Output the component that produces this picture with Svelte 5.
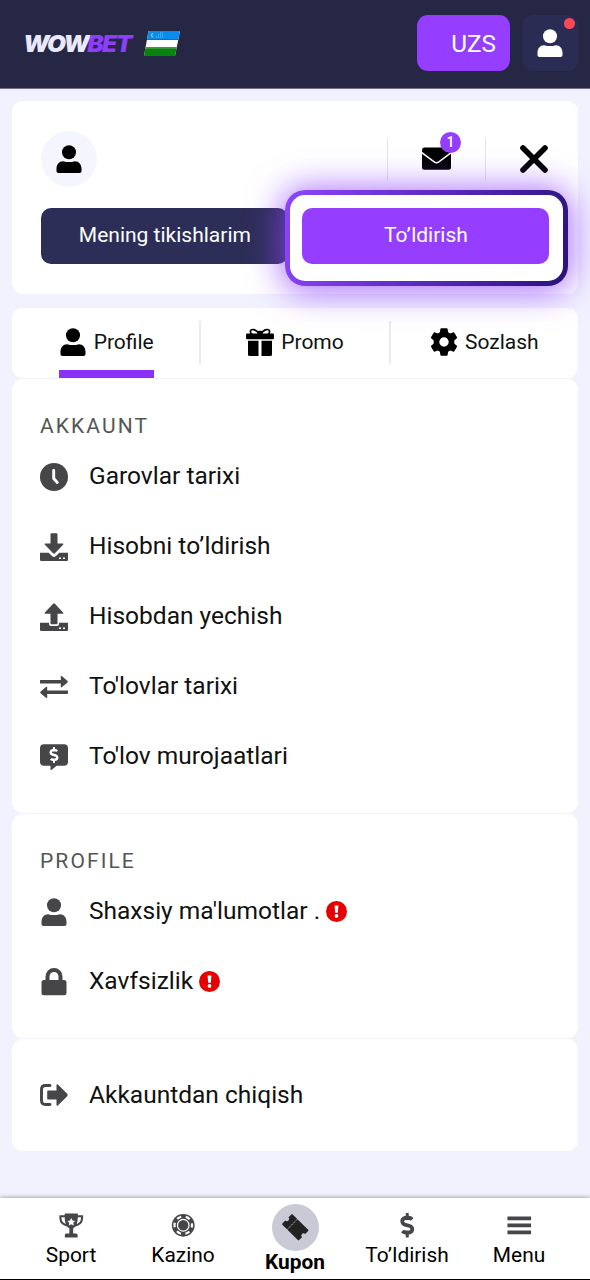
<script>
  const account = [
    { icon: 'clock', label: 'Garovlar tarixi' },
    { icon: 'download', label: 'Hisobni to’ldirish' },
    { icon: 'upload', label: 'Hisobdan yechish' },
    { icon: 'swap', label: "To'lovlar tarixi" },
    { icon: 'bubble', label: "To'lov murojaatlari" },
  ];
  const profile = [
    { icon: 'user', label: "Shaxsiy ma'lumotlar .", alert: true },
    { icon: 'lock', label: 'Xavfsizlik', alert: true },
  ];
  const exit = [{ icon: 'exit', label: 'Akkauntdan chiqish' }];
  const tabs = [
    { icon: 'user', label: 'Profile', active: true },
    { icon: 'gift', label: 'Promo' },
    { icon: 'gear', label: 'Sozlash' },
  ];
  const nav = [
    { icon: 'trophy', label: 'Sport' },
    { icon: 'chip', label: 'Kazino' },
    { icon: 'ticket', label: 'Kupon', active: true },
    { icon: 'dollar', label: 'To’ldirish' },
    { icon: 'menu', label: 'Menu' },
  ];
  const dollar = 'M209.2 233.4l-108-31.6C88.7 198.2 80 186.5 80 173.5c0-16.3 13.2-29.5 29.5-29.5h66.3c12.2 0 24.2 3.7 34.2 10.5 6.1 4.1 14.3 3.1 19.5-2l34.8-34c7.1-6.9 6.1-18.4-1.8-24.5C238 74.8 207.4 64.1 176 64V16c0-8.8-7.2-16-16-16h-32c-8.8 0-16 7.2-16 16v48h-2.5C45.8 64-5.4 118.7.5 183.6c4.2 46.1 39.4 83.6 83.8 96.6l102.5 30c12.5 3.7 21.2 15.3 21.2 28.3 0 16.3-13.2 29.5-29.5 29.5h-66.3C100 368 88 364.3 78 357.5c-6.1-4.1-14.3-3.1-19.5 2l-34.8 34c-7.1 6.9-6.1 18.4 1.8 24.5 24.5 19.2 55.1 29.9 86.5 30v48c0 8.8 7.2 16 16 16h32c8.8 0 16-7.2 16-16v-48.2c46.6-.9 90.3-28.6 105.7-72.7 21.5-61.6-14.6-124.8-72.5-141.7z';
</script>

{#snippet icon(name)}
  <svg class="icon" viewBox="0 0 28 28" fill="currentColor">
    {#if name === 'user'}
      <circle cx="14" cy="7.2" r="7" />
      <path d="M8.2 16.2c1.8.6 3.7.9 5.800.9s4-.3 5.800-.9c4.200 0 6.700 3.500 6.700 7.300v2.500c0 1.300-.8 2-2 2H3.500c-1.200 0-2-.7-2-2v-2.500c0-3.800 2.500-7.300 6.700-7.300z" />
    {:else if name === 'gift'}
      <rect x="0" y="5.500" width="28" height="5.700" rx="1.200" />
      <path d="M2 12.800h10.500V28H3.500Q2 28 2 26.500zM15.500 12.800H26v13.700q0 1.500-1.500 1.500h-9z" />
      <path d="M13.500 6.500C10 .5 4 .2 4.500 4c.1 1 .6 1.700 1.300 2.500M14.500 6.500C18 .5 24 .2 23.500 4c-.1 1-.6 1.700-1.300 2.500" fill="none" stroke="currentColor" stroke-width="1.700" />
      <rect x="11.300" y="2.800" width="5.400" height="3.500" rx="1.500" />
    {:else if name === 'gear'}
      <path fill-rule="evenodd" d="M11.200.3h5.600q.7 0 .8.7l.5 3.200 2.200 1.300 3.100-1.200q.6-.2.900.4l2.700 4.600q.3.600-.2 1l-2.500 2.100v3.200l2.500 2.100q.5.4.2 1l-2.700 4.600q-.3.600-.9.400l-3.100-1.200-2.200 1.300-.5 3.200q-.1.700-.8.700h-5.600q-.7 0-.8-.7l-.5-3.200-2.200-1.300-3.100 1.200q-.6.200-.9-.4L1 18.700q-.3-.6.200-1l2.500-2.100v-3.200l-2.500-2.100q-.5-.4-.2-1l2.700-4.600q.3-.6.9-.4l3.100 1.200 2.200-1.300.5-3.200q.1-.7.800-.7zM14 9.300a4.700 4.700 0 1 0 0 9.400a4.700 4.700 0 1 0 0-9.400z" />
    {:else if name === 'clock'}
      <circle cx="14" cy="14" r="14" />
      <path d="M13.700 7.500v8l3.600 4" fill="none" stroke="#fff" stroke-width="2.900" stroke-linecap="round" stroke-linejoin="round" />
    {:else if name === 'download'}
      <path d="M0 19.800h8.600l3.700 3.500q1.700 1.500 3.400 0l3.700-3.500H28v7q0 1.200-1.200 1.200H1.200Q0 28 0 26.800z" />
      <path d="M10.500 1.200Q10.500.2 11.500.2h5q1 0 1 1v9.300h5q1.700 0 .6 1.300l-8.200 8.400q-.9.900-1.800 0L4.900 11.800q-1.100-1.300.6-1.300h5z" />
      <path d="M19 24.500h2v1.500h-2zM23 24.500h2v1.500h-2z" fill="#fff" />
    {:else if name === 'upload'}
      <path d="M0 19.800h9v.6q0 2.600 2.600 2.600h4.800q2.600 0 2.600-2.600v-.6h9v7q0 1.200-1.200 1.200H1.200Q0 28 0 26.800z" />
      <path d="M10.500 20.300q0 1 1 1h5q1 0 1-1V10.700h5q1.700 0 .6-1.300L14.900.7q-.9-.9-1.800 0L4.900 9.400q-1.100 1.300.6 1.300h5z" />
      <path d="M19 24.500h2v1.500h-2zM23 24.500h2v1.500h-2z" fill="#fff" />
    {:else if name === 'swap'}
      <path d="M0 7.200q0-.3.500-.3h20.300V3.800q0-1.500 1.200-.6l5.300 4.600q1 1 0 1.900L22 14q-1.200.8-1.200-.6v-2.900H.5q-.5 0-.5-.5zM28 17.900q0-.5-.5-.5H7.200v-2.800q0-1.500-1.200-.6L.7 18.500q-1 1 0 1.900L6 24.800q1.200.9 1.200-.6V21h19.800q1 0 1-1z" />
    {:else if name === 'bubble'}
      <path d="M4 1.200h20q4 0 4 4v13.500q0 4-4 4h-7.300l-5 4q-1.200.7-1.200-.7v-3.300H4q-4 0-4-4V5.200q0-4 4-4z" />
      <svg x="9.500" y="4" width="9" height="16" viewBox="0 0 288 512"><path fill="#fff" d={dollar} /></svg>
    {:else if name === 'lock'}
      <path fill-rule="evenodd" d="M5.500 12V8.500a8.500 8.500 0 0 1 17 0V12H24q2.500 0 2.500 2.500v10.300q0 2.500-2.500 2.500H4q-2.500 0-2.500-2.500V14.500Q1.500 12 4 12zM9.500 12h9V8.500a4.500 4.500 0 0 0-9 0z" />
    {:else if name === 'exit'}
      <path d="M10 4.500H5.500Q1.500 4.500 1.500 8.500v11q0 4 4 4H10" fill="none" stroke="currentColor" stroke-width="2.900" stroke-linecap="round" />
      <path d="M8.200 9.400h8.300V4.300q0-1.800 1.400-.8l9.300 9.300q1 1.200 0 2.400l-9.300 9.300q-1.400 1-1.400-.8v-5.100H8.200q-1 0-1-1v-7.200q0-1 1-1z" />
    {:else if name === 'trophy'}
      <path d="M6.500.5h15v4q0 9.800-5.300 13v6h3.300q1.800 0 1.800 1.800V28H6.700v-2.700q0-1.800 1.800-1.800h3.300v-6Q6.500 14.300 6.500 4.500z" />
      <path d="M7.500 3.800H1.600v2.400q.4 6.700 8.600 8.300M20.500 3.800h5.900v2.400q-.4 6.700-8.600 8.300" fill="none" stroke="currentColor" stroke-width="2.300" />
      <path d="M14 5.700l1.400 2.800 3.100.5-2.200 2.200.5 3.100-2.800-1.400-2.800 1.400.5-3.100L9.500 9l3.100-.5z" fill="#fff" />
    {:else if name === 'chip'}
      <circle cx="14" cy="14" r="13" />
      <circle cx="14" cy="14" r="10" fill="none" stroke="#fff" stroke-width="2.500" stroke-dasharray="5.236 5.236" stroke-dashoffset="2.600" />
      <circle cx="14" cy="14" r="6.600" fill="none" stroke="#fff" stroke-width="1.400" />
    {:else if name === 'ticket'}
      <g transform="rotate(45 14 14)">
        <path d="M1.500 5.700h25q1 0 1 1v4.700a2.600 2.600 0 0 0 0 5.200v4.700q0 1-1 1h-25q-1 0-1-1v-4.700a2.600 2.600 0 0 0 0-5.200V6.700q0-1 1-1z" />
        <path d="M9.200 5v18" stroke="#cacad7" stroke-width="1" stroke-dasharray="1.800 1" />
      </g>
    {:else if name === 'dollar'}
      <svg x="6" y="0" width="16" height="28" viewBox="0 0 288 512"><path d={dollar} /></svg>
    {:else if name === 'menu'}
      <path d="M.5 4h27v4.200H.5zM.5 12h27v4.200H.5zM.5 20h27v4.200H.5z" />
    {/if}
  </svg>
{/snippet}

{#snippet row(item)}
  <div class="row">
    <span class="row-icon">{@render icon(item.icon)}</span>
    <span class="row-label">{item.label}</span>
    {#if item.alert}
      <svg class="alert" viewBox="0 0 21 21">
        <circle cx="10.500" cy="10.500" r="10.500" fill="#e60000" />
        <path d="M8.600 4.500h3.800l-.5 7.200H9.100z" fill="#fff" />
        <circle cx="10.500" cy="14.900" r="1.900" fill="#fff" />
      </svg>
    {/if}
  </div>
{/snippet}

<div class="page">
  <header>
    <div class="logo"><span>WOW</span><span class="bet">BET</span></div>
    <svg class="flag" viewBox="0 0 36 25">
      <defs><clipPath id="flag-shape"><path d="M4.500 0H36l-5 25H0z" /></clipPath></defs>
      <g clip-path="url(#flag-shape)">
        <rect width="36" height="25" fill="#fff" />
        <rect width="36" height="8" fill="#098cec" />
        <rect y="8" width="36" height="1" fill="#c62651" />
        <rect y="16" width="36" height="1.200" fill="#d54b3c" />
        <rect y="17.200" width="36" height="8" fill="#07840d" />
        <path d="M9.500 2a2.300 2.300 0 1 0 0 4.600a2.600 2.600 0 0 1 0-4.600z" fill="#d5edff" />
        <path d="M12 6h7M14 4h5M16 2h3" stroke="#9bd1fa" stroke-width=".8" stroke-dasharray="1 1" />
      </g>
    </svg>
    <button class="currency">UZS</button>
    <button class="avatar">{@render icon('user')}<i></i></button>
  </header>

  <main>
    <section class="card summary">
      <div class="top">
        <div class="face">{@render icon('user')}</div>
        <div class="mail">
          <svg viewBox="0 0 29 23">
            <path d="M2.500.5h24q2.500 0 2.500 2.500v1.800L16.500 14.200q-2 1.500-4 0L0 4.800V3Q0 .5 2.500.5z" />
            <path d="M0 6.800l11.700 8.700q2.800 2 5.600 0L29 6.800v13.500q0 2.500-2.500 2.500h-24Q0 22.800 0 20.300z" />
          </svg>
          <b>1</b>
        </div>
        <div class="close">
          <svg viewBox="0 0 28 28"><path d="M3 3l22 22M25 3L3 25" stroke="#000" stroke-width="5.600" stroke-linecap="round" /></svg>
        </div>
      </div>
      <div class="buttons">
        <button class="bets">Mening tikishlarim</button>
        <div class="deposit-wrap">
          <div class="frame"></div>
          <button class="deposit">To’ldirish</button>
        </div>
      </div>
    </section>

    <nav class="card tabs">
      {#each tabs as tab}
        <div class="tab">
          <div class="tab-label" class:active={tab.active}>{@render icon(tab.icon)}<span>{tab.label}</span></div>
        </div>
      {/each}
    </nav>

    <section class="card list account">
      <h2>AKKAUNT</h2>
      {#each account as item}{@render row(item)}{/each}
    </section>
    <section class="card list profile">
      <h2>PROFILE</h2>
      {#each profile as item}{@render row(item)}{/each}
    </section>
    <section class="card list leave">
      {#each exit as item}{@render row(item)}{/each}
    </section>
  </main>

  <footer>
    {#each nav as item}
      <div class="nav-item" class:current={item.active}>
        <span class="nav-icon">{@render icon(item.icon)}</span>
        <span class="nav-label">{item.label}</span>
      </div>
    {/each}
  </footer>
</div>

<style>
  :global(body) { margin: 0; }
  .page {
    width: 590px; height: 1280px; display: flex; flex-direction: column; overflow: hidden;
    box-sizing: border-box; background: #f2f2fe; font-family: Roboto, sans-serif; color: #111;
  }
  .page :global(*) { box-sizing: border-box; }
  button { border: 0; padding: 0; font: inherit; color: #fff; }
  svg { display: block; overflow: visible; }
  .icon { width: 28px; height: 28px; flex: none; }

  header {
    height: 89px; flex: none; display: flex; align-items: center; padding: 0 12px 1px 24px;
    background: #262744; border-bottom: 1px solid #70708a;
  }
  .logo {
    display: flex; width: 120px; font: italic 900 22.500px/30px Inter, sans-serif;
    letter-spacing: -1.400px; color: #e9e9fb; white-space: nowrap;
    transform: scaleX(1.085); transform-origin: 8px 50%;
  }
  .bet { color: #8d3efa; margin-left: -1px; }
  .flag { width: 36px; height: 25px; }
  .currency {
    width: 93px; height: 56px; margin: 0 0 1px auto; padding-left: 20px; border-radius: 11px;
    background: #953eff; font-size: 24.300px;
  }
  .avatar {
    position: relative; width: 56px; height: 56px; margin: 0 0 1px 12px; border-radius: 11px;
    background: #2b2c54; display: flex; align-items: center; justify-content: center;
  }
  .avatar i { position: absolute; right: 3px; top: 3px; width: 11px; height: 11px; border-radius: 50%; background: #ff4655; }

  main { flex: 1; padding: 12px 12px 0; display: flex; flex-direction: column; }
  .card { background: #fff; border-radius: 11px; }
  .summary { height: 193px; margin-bottom: 14px; padding: 30px 29.400px; }
  .top { display: flex; align-items: center; height: 56px; margin-right: -29.400px; }
  .face {
    width: 56px; height: 56px; border-radius: 50%; background: #f5f5fe; margin-right: auto;
    display: flex; align-items: center; justify-content: center; color: #000;
  }
  .mail, .close { height: 42px; border-left: 1.500px solid #e4e4e8; display: flex; align-items: center; }
  .mail { position: relative; width: 98px; padding-left: 34px; }
  .mail svg { width: 29px; height: 23px; margin-top: -1px; }
  .mail b {
    position: absolute; left: 52px; top: -6px; width: 21px; height: 21px; border-radius: 50%;
    background: #953eff; color: #fff; font-size: 14px; font-weight: 500; line-height: 21px; text-align: center;
  }
  .close { width: 93px; padding-left: 34px; }
  .close svg { width: 28px; height: 28px; margin-top: -1px; }
  .buttons { display: flex; gap: 14px; margin-top: 21px; font-size: 21px; }
  .bets, .deposit { width: 247px; height: 56px; border-radius: 10px; padding-bottom: 2px; }
  .bets { background: #2d2e57; flex: none; }
  .deposit-wrap { position: relative; width: 247px; flex: none; }
  .deposit { position: relative; background: #953eff; display: block; }
  .frame {
    position: absolute; left: -17.400px; top: -18px; width: 283px; height: 96px; border-radius: 20px;
    border: 5px solid transparent;
    background: linear-gradient(#fff, #fff) padding-box, linear-gradient(105deg, #8d46fb, #5e2bc4 48%, #29127c) border-box;
    box-shadow: 0 2px 34px 3px rgba(144, 68, 255, .8);
  }

  .tabs { height: 70px; display: flex; margin-bottom: 1px; padding-top: 13px; }
  .tab { flex: 1; display: flex; justify-content: center; height: 43px; }
  .tab + .tab { border-left: 2px solid #ebebee; }
  .tab-label { height: 57px; display: flex; gap: 7px; padding-bottom: 15px; align-items: center; font-size: 21px; color: #111; }
  .tab-label span { margin-top: -1px; }
  .tab-label :global(.icon) { color: #000; }
  .tab-label.active {
    margin-left: 1px;
    background: linear-gradient(#8b30fa, #8b30fa) bottom / 100% 8px no-repeat;
  }

  .list { padding-left: 28px; margin-bottom: 1px; }
  .account { height: 434px; padding-top: 35px; }
  .profile { height: 224px; padding-top: 35px; }
  .leave { height: 112px; padding-top: 21px; }
  h2 { margin: 0 0 2.500px; height: 25px; font-size: 21px; line-height: 25px; font-weight: 400; letter-spacing: 2.100px; color: #555; }
  .row { height: 70px; display: flex; align-items: center; font-size: 24.500px; white-space: pre; }
  .row-icon { width: 49px; color: #464649; }
  .row-label { margin-top: -2px; }
  .alert { width: 21px; height: 21px; margin: -1px 0 0 6px; }

  footer {
    height: 82px; flex: none; display: flex; padding: 0 15px; background: #fff;
    border-bottom: 1px solid #000; box-shadow: 0 -1px 4px rgba(0, 0, 0, .3);
  }
  .nav-item { flex: 1; display: flex; flex-direction: column; align-items: center; padding-top: 15px; color: #000; font-size: 20.900px; line-height: 24px; }
  .nav-icon { width: 25px; height: 25px; display: flex; justify-content: center; align-items: center; color: #464649; }
  .nav-icon :global(.icon) { width: 24.500px; height: 24.500px; }
  .nav-label { margin-top: 5px; }
  .current { padding-top: 6px; font-weight: 700; }
  .current .nav-icon { width: 47px; height: 47px; border-radius: 50%; background: #cacad7; color: #222; }
  .current .nav-label { margin-top: -1px; }
</style>
